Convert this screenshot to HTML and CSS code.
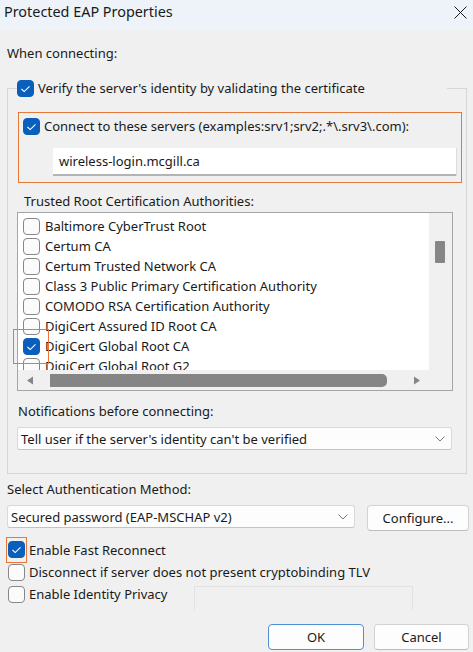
FILE: index.html
```html
<!DOCTYPE html>
<html lang="en">
<head>
<meta charset="utf-8">
<title>Protected EAP Properties</title>
<link rel="stylesheet" href="styles.css">
</head>
<body>
<div class="dialog">
  <div class="titlebar">
    <span class="title">Protected EAP Properties</span>
    <svg class="close" width="13" height="13" viewBox="0 0 13 13"><path d="M0.5 0.5 L12.5 12.5 M12.5 0.5 L0.5 12.5"/></svg>
  </div>
  <div class="content">
    <div class="label when">When connecting:</div>
    <fieldset class="group">
      <legend class="legend">
        <span class="cbrow">
          <span class="cb on"><svg viewBox="0 0 17 17"><path d="M4.5 9 L7.2 11.6 L12.5 6.3"/></svg></span>
          <span>Verify the server's identity by validating the certificate</span>
        </span>
      </legend>
      <div class="servers">
        <div class="cbrow">
          <span class="cb on"><svg viewBox="0 0 17 17"><path d="M4.5 9 L7.2 11.6 L12.5 6.3"/></svg></span>
          <span>Connect to these servers (examples:srv1;srv2;.*\.srv3\.com):</span>
        </div>
        <div class="textbox">wireless-login.mcgill.ca</div>
      </div>
      <div class="label trusted">Trusted Root Certification Authorities:</div>
      <div class="listbox">
        <div class="listgrid">
          <div class="items">
            <div class="item"><span class="cb"></span><span>Baltimore CyberTrust Root</span></div>
            <div class="item"><span class="cb"></span><span>Certum CA</span></div>
            <div class="item"><span class="cb"></span><span>Certum Trusted Network CA</span></div>
            <div class="item"><span class="cb"></span><span>Class 3 Public Primary Certification Authority</span></div>
            <div class="item"><span class="cb"></span><span>COMODO RSA Certification Authority</span></div>
            <div class="item"><span class="cb"></span><span>DigiCert Assured ID Root CA</span></div>
            <div class="item"><span class="cb on"><svg viewBox="0 0 17 17"><path d="M4.5 9 L7.2 11.6 L12.5 6.3"/></svg></span><span>DigiCert Global Root CA</span></div>
            <div class="item"><span class="cb"></span><span>DigiCert Global Root G2</span></div>
          </div>
          <div class="vscroll"><div class="vthumb"></div></div>
          <div class="hscroll">
            <svg class="arrow" width="8" height="9" viewBox="0 0 8 9"><path d="M7 0.5 L7 8.5 L1 4.5 Z"/></svg>
            <div class="hthumb"></div>
            <svg class="arrow" width="8" height="9" viewBox="0 0 8 9"><path d="M1 0.5 L1 8.5 L7 4.5 Z"/></svg>
          </div>
          <div class="corner"></div>
        </div>
        <div class="mark list-mark"></div>
      </div>
      <div class="label notif">Notifications before connecting:</div>
      <div class="select notify-select">
        <span>Tell user if the server's identity can't be verified</span>
        <svg class="chev" width="10" height="6" viewBox="0 0 10 6"><path d="M0.5 0.5 L5 5 L9.5 0.5"/></svg>
      </div>
    </fieldset>
    <div class="label auth">Select Authentication Method:</div>
    <div class="auth-row">
      <div class="select method-select">
        <span>Secured password (EAP-MSCHAP v2)</span>
        <svg class="chev" width="10" height="6" viewBox="0 0 10 6"><path d="M0.5 0.5 L5 5 L9.5 0.5"/></svg>
      </div>
      <button class="btn configure">Configure...</button>
    </div>
    <div class="options">
      <div class="cbrow opt first">
        <span class="cb-wrap">
          <span class="cb on"><svg viewBox="0 0 17 17"><path d="M4.5 9 L7.2 11.6 L12.5 6.3"/></svg></span>
          <span class="mark opt-mark"></span>
        </span>
        <span>Enable Fast Reconnect</span>
      </div>
      <div class="cbrow opt">
        <span class="cb-wrap"><span class="cb"></span></span>
        <span>Disconnect if server does not present cryptobinding TLV</span>
      </div>
      <div class="cbrow opt">
        <span class="cb-wrap"><span class="cb"></span></span>
        <span>Enable Identity Privacy</span>
        <div class="disabled-box"></div>
      </div>
    </div>
    <div class="actions">
      <button class="btn ok">OK</button>
      <button class="btn cancel">Cancel</button>
    </div>
  </div>
</div>
</body>
</html>
```

FILE: styles.css
```css
html, body {
  margin: 0;
  padding: 0;
  overflow: hidden;
}
body {
  width: 473px;
  height: 652px;
  background: #f0f0f0;
  font-family: "Noto Sans", "Open Sans", sans-serif;
  font-size: 13px;
  color: #1a1a1a;
}
.dialog {
  width: 473px;
  height: 652px;
  background: #f0f0f0;
}
.titlebar {
  height: 30px;
  background: #edf3f9;
  display: flex;
  align-items: flex-start;
  justify-content: space-between;
  padding: 0 6px 0 4px;
  box-sizing: border-box;
}
.title {
  font-size: 14.4px;
  line-height: 24px;
  color: #1a1a1a;
}
.close {
  margin-top: 6px;
  fill: none;
  stroke: #1a1a1a;
  stroke-width: 1;
}
.content {
  padding: 0 4px 0 7px;
}
.label {
  line-height: 20px;
  height: 20px;
  white-space: nowrap;
}
.when {
  margin-top: 13px;
  margin-bottom: 15px;
}
.group {
  margin: 0;
  padding: 0;
  width: 460px;
  box-sizing: border-box;
  border: 1px solid #d6d6d6;
  min-inline-size: 0;
}
.legend {
  margin-left: 9px;
  padding: 0;
  width: 430px;
  height: 20px;
}
.cbrow {
  display: flex;
  align-items: center;
  height: 20px;
  white-space: nowrap;
}
.cbrow .cb {
  margin-right: 4px;
}
.cb {
  flex: none;
  width: 17px;
  height: 17px;
  box-sizing: border-box;
  border: 1px solid #878787;
  border-radius: 4px;
  background: #fbfbfb;
  display: inline-flex;
  align-items: center;
  justify-content: center;
}
.cb.on {
  background: #0a5fbd;
  border-color: #0a5fbd;
}
.cb svg {
  width: 17px;
  height: 17px;
  flex: none;
  fill: none;
  stroke: #ffffff;
  stroke-width: 1.1;
}
.servers {
  margin: 14px 0 0 10px;
  width: 444px;
  box-sizing: border-box;
  border: 1px solid #e5793a;
  padding: 3px 8px 6px 4px;
}
.textbox {
  margin: 12px 0 0 30px;
  width: 403px;
  height: 28px;
  box-sizing: border-box;
  background: #ffffff;
  border-bottom: 2px solid #b4b4b4;
  box-shadow: 1px 0 0 #dcdcdc;
  padding-left: 6px;
  line-height: 26px;
}
.trusted {
  margin-top: 8px;
  padding-left: 16px;
}
.listbox {
  position: relative;
  margin: 1px 0 0 9px;
  width: 436px;
  height: 179px;
  box-sizing: border-box;
  border: 1px solid #a2a6aa;
}
.listgrid {
  display: grid;
  grid-template-columns: 411px 23px;
  grid-template-rows: 157px 20px;
  overflow: hidden;
}
.items {
  background: #ffffff;
  padding: 3px 0 0 5px;
  overflow: hidden;
}
.item {
  display: flex;
  align-items: center;
  height: 20px;
  white-space: nowrap;
}
.item .cb {
  margin-right: 5px;
}
.vscroll {
  background: #f0f0f0;
}
.vthumb {
  margin: 28px 0 0 6px;
  width: 10px;
  height: 22px;
  background: #868686;
  border-radius: 1px;
}
.hscroll {
  background: #f0f0f0;
  display: flex;
  align-items: center;
  padding: 0 8px 0 8px;
}
.arrow {
  flex: none;
  fill: #858585;
}
.hthumb {
  width: 345px;
  height: 13px;
  margin: 1px 26px 0 16px;
  background: #858585;
  border-radius: 0 5px 5px 0;
}
.corner {
  background: #f0f0f0;
}
.mark {
  border: 1px solid #e5793a;
  box-sizing: border-box;
}
.list-mark {
  position: absolute;
  left: -5px;
  top: 116px;
  width: 36px;
  height: 35px;
}
.notif {
  margin-top: 10px;
  padding-left: 10px;
}
.select {
  display: flex;
  align-items: center;
  justify-content: space-between;
  height: 23px;
  box-sizing: border-box;
  background: #fdfdfd;
  border: 1px solid #d9d9d9;
  border-bottom-color: #c4c4c4;
  border-radius: 3px;
  padding: 0 6px 0 3px;
  white-space: nowrap;
}
.chev {
  flex: none;
  fill: none;
  stroke: #7a7a7a;
  stroke-width: 1;
}
.notify-select {
  margin: 6px 0 23px 9px;
  width: 435px;
}
.auth {
  margin-top: 5px;
}
.auth-row {
  display: flex;
  align-items: flex-start;
  margin-top: 6px;
}
.method-select {
  width: 348px;
}
.btn {
  font-family: inherit;
  font-size: 13px;
  color: #1a1a1a;
  background: #fdfdfd;
  border: 1px solid #d3d3d3;
  border-bottom-color: #bcbcbc;
  border-radius: 4px;
  height: 26px;
  padding: 0;
  box-sizing: border-box;
}
.configure {
  margin-left: 12px;
  width: 102px;
}
.options {
  padding-top: 7px;
}
.opt {
  height: 22px;
}
.opt.first {
  height: 23px;
}
.cb-wrap {
  position: relative;
  display: inline-flex;
  margin-left: 1px;
  margin-right: 4px;
}
.cbrow .cb-wrap .cb {
  margin-right: 0;
}
.opt-mark {
  position: absolute;
  left: -2px;
  top: -4px;
  width: 21px;
  height: 26px;
}
.disabled-box {
  align-self: flex-start;
  margin: 3px 56px 0 auto;
  width: 219px;
  height: 24px;
  box-sizing: border-box;
  border: 1px solid #e2e2e2;
  border-bottom: none;
  flex: none;
}
.actions {
  display: flex;
  justify-content: flex-end;
  gap: 10px;
  margin-top: 19px;
}
.ok {
  width: 96px;
  border: 1px solid #4f8fd6;
}
.cancel {
  width: 95px;
}
```
